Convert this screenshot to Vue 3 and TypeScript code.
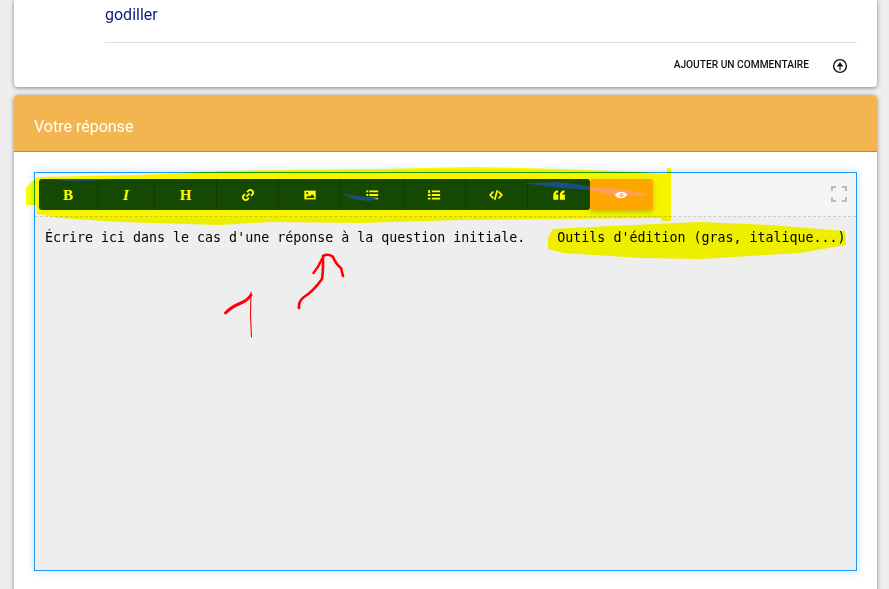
<script setup lang="ts">
interface ToolButton {
  name: string;
  label?: string;
  path?: string;
}

const tools: ToolButton[] = [
  { name: 'bold', label: 'B' },
  { name: 'italic', label: 'I' },
  { name: 'heading', label: 'H' },
  { name: 'link', path: 'M6.2 9.8 9.8 6.2M7 4.6l1.6-1.6a2.8 2.8 0 0 1 4 0l.4.4a2.8 2.8 0 0 1 0 4L11.4 9M9 11.4 7.4 13a2.8 2.8 0 0 1-4 0L3 12.6a2.8 2.8 0 0 1 0-4L4.6 7' },
  { name: 'image' },
  { name: 'list', path: 'M5 3.800H15M5 8H15M5 12.200H15M1.500 3.800h2.200M1.500 8h2.200M1.500 12.200h2.200' },
  { name: 'ordered', path: 'M5.500 3.800H15M5.500 8H15M5.500 12.200H15M2.500 2.200v3.400M1 8h3M1 12.200h3' },
  { name: 'code', path: 'M5 4 1.400 8 5 12M11 4 14.600 8 11 12M9.500 2.500 6.500 13.500' },
]

const sentence = "Écrire ici dans le cas d'une réponse à la question initiale.    Outils d'édition (gras, italique...)"
</script>

<template>
  <div class="page">
    <section class="card comment">
      <div class="comment-body">
        <p class="word">godiller</p>
        <div class="actions">
          <span class="add">AJOUTER UN COMMENTAIRE</span>
          <svg class="up" viewBox="0 0 16 16" aria-hidden="true">
            <circle cx="8" cy="8" r="6.4" fill="none" stroke="#111" stroke-width="1.4" />
            <path d="M8 12V7M5.800 8 8 5 10.200 8z" fill="#111" stroke="#111" stroke-width="1.1" />
          </svg>
        </div>
      </div>
    </section>

    <section class="card answer">
      <h2 class="answer-head">Votre réponse</h2>
      <div class="answer-body">
        <div class="editor">
          <div class="toolbar">
            <div class="tools">
              <button v-for="t in tools" :key="t.name" type="button" class="tool">
                <span v-if="t.label" class="glyph" :class="t.name">{{ t.label }}</span>
                <svg v-else-if="t.name === 'image'" class="icon" viewBox="0 0 16 16" aria-hidden="true">
                  <path d="M1.500 3h13v10h-13z" fill="#ffff00" />
                  <path d="M3.200 11.400l2.800-2.800 1.600 1.400 2.800-3 2.400 2.400v2z" fill="#154800" />
                  <circle cx="4.800" cy="5.800" r="1.200" fill="#154800" />
                </svg>
                <svg v-else class="icon" viewBox="0 0 16 16" aria-hidden="true">
                  <path :d="t.path" fill="none" stroke="#ffff00" :stroke-width="t.name === 'code' ? 2 : 2.100" />
                </svg>
              </button>
              <button type="button" class="tool">
                <svg class="icon" viewBox="0 0 16 16" aria-hidden="true">
                  <path d="M1.500 13.500V8.200C1.500 5 3.500 3 6.800 2.700v2.300C5 5.200 4.200 6 4.100 7.300h3.100v6.200zM9 13.500V8.200C9 5 11 3 14.300 2.700v2.300c-1.800.2-2.600 1-2.700 2.300h3.100v6.200z" fill="#ffff00" />
                </svg>
              </button>
              <button type="button" class="tool preview">
                <svg class="streak" viewBox="0 0 63 31" aria-hidden="true">
                  <path d="M0 8 30 10 58 15 50 17 20 16 0 11Z" fill="#ff9f5c" />
                </svg>
                <svg class="icon eye" viewBox="0 0 16 16" aria-hidden="true">
                  <path d="M1 8c1.800-2.600 4.200-3.800 7-3.800s5.200 1.200 7 3.800c-1.800 2.600-4.200 3.800-7 3.800S2.800 10.600 1 8z" fill="#fff" />
                  <circle cx="8.500" cy="8" r="2.300" fill="#ff9f5c" />
                  <circle cx="8" cy="7.500" r="1" fill="#fff" />
                </svg>
              </button>
            </div>
            <svg class="fullscreen" viewBox="0 0 16 16" aria-hidden="true">
              <path d="M1 5V1h4M11 1h4v4M15 11v4h-4M5 15H1v-4" fill="none" stroke="#bbb" stroke-width="2" />
            </svg>
          </div>
          <div class="content">
            <span class="line">{{ sentence }}</span>
          </div>
        </div>
      </div>
    </section>

    <!-- feutre jaune, passe sous les boutons et le texte -->
    <svg class="marks low" viewBox="0 0 889 589" aria-hidden="true">
      <path d="M26 187 38 177 137 175 220 171 290 170 380 169 473 167 560 169 640 172 667 174 667 168 671 168 671 221 662 221 661 218 560 219 460 220 360 223 270 222 220 225 120 222 60 218 37 214 36 205 26 205Z" fill="#ffff00" />
      <path d="M553 229 610 226 700 222 770 225 845 231 846 245 800 253 700 259 640 258 563 253 548 249 548 238Z" fill="#ffff00" />
    </svg>

    <!-- traits faits a la main par dessus la capture -->
    <svg class="marks high" viewBox="0 0 889 589" aria-hidden="true">
      <path d="M53 179 113 179 90 181 66 181Z" fill="#1b4f7a" />
      <path d="M342 193 352 195 380 199 368 201 352 199Z" fill="#1b4f7a" />
      <path d="M522 183 560 182 590 186 590 190 560 188Z" fill="#1b4f7a" />
      <g fill="none" stroke="#f00" stroke-linecap="round" stroke-linejoin="round">
        <path d="M225.500 313C231 307 236 305 241 303S249 298 251 295" stroke-width="3" />
        <path d="M251 292 250.500 315 251.500 337" stroke-width="1.100" />
        <path d="M299 308C298.500 303 300 300 304 297C312 292 317 286 322 279C323.500 270 323 264 323 256C327 254 331 255 333 257C335 262 337 265 341 268L343 276" stroke-width="2.600" />
        <path d="M313.500 273C316 270 319 266 322 259" stroke-width="2.400" />
      </g>
    </svg>
  </div>
</template>

<style>
html, body { margin: 0; height: 100%; overflow: hidden; background: #eee; }
</style>

<style scoped>
.page {
  position: relative;
  height: 589px;
  overflow: hidden;
  box-sizing: border-box;
  padding: 0 12px 0 14px;
  background: #eee;
  font-family: Roboto, "Liberation Sans", sans-serif;
}
.card {
  background: #fff;
  border-radius: 4px;
  box-shadow: 0 1px 4px rgba(0, 0, 0, 0.45);
}
.comment { height: 87px; border-radius: 0 0 4px 4px; }
.comment-body { margin: 0 20px 0 91px; }
.word {
  margin: 0;
  height: 43px;
  box-sizing: border-box;
  padding-top: 6px;
  border-bottom: 1px solid #ddd;
  font-size: 16px;
  line-height: 18px;
  color: #0b1a80;
}
.actions {
  display: flex;
  align-items: center;
  justify-content: flex-end;
  gap: 23px;
  padding: 12px 9px 0 0;
}
.add {
  font-size: 10.200px;
  font-weight: 500;
  line-height: 14px;
  color: #111;
}
.up { width: 16px; height: 16px; margin-top: 3px; }

.answer { margin-top: 8px; height: 520px; }
.answer-head {
  margin: 0;
  height: 57px;
  box-sizing: border-box;
  padding: 0 20px;
  background: #f2b550;
  border-bottom: 1px solid #c98a1c;
  border-radius: 4px 4px 0 0;
  font-size: 16px;
  font-weight: 400;
  line-height: 63px;
  color: #fff;
}
.answer-body { padding: 20px 20px 0; }
.editor {
  height: 399px;
  box-sizing: border-box;
  border: 1px solid #2196f3;
  background: #eee;
  box-shadow: 0 0 8px rgba(33, 150, 243, 0.3);
}
.toolbar {
  display: flex;
  justify-content: space-between;
  align-items: flex-start;
  height: 44px;
  box-sizing: border-box;
  padding: 6px 9px 0 4px;
  background: #f5f5f5;
  border-bottom: 1px dashed #ccc;
}
.tools { display: flex; position: relative; z-index: 2; }
.tool {
  position: relative;
  display: flex;
  align-items: center;
  justify-content: center;
  width: 62.140px;
  height: 31px;
  padding: 0;
  border: 0;
  border-right: 1px solid #103c00;
  background: #154800;
}
.tool:nth-child(1) { width: 59px; border-radius: 3px 0 0 3px; }
.tool:nth-child(2) { width: 57px; }
.tool:nth-child(9) { border-radius: 0 3px 3px 0; border-right: 0; }
.preview {
  width: 63px;
  background: #ffa500;
  border-right: 0;
  border-radius: 3px;
  box-shadow: 0 2px 5px rgba(90, 80, 0, 0.35);
}
.glyph {
  font-family: "Liberation Serif", serif;
  font-size: 15px;
  font-weight: 700;
  line-height: 16px;
  color: #ffff00;
}
.italic { font-style: italic; }
.icon { width: 14px; height: 14px; }
.streak { position: absolute; left: 0; top: 0; width: 63px; height: 31px; }
.eye { position: relative; }
.fullscreen { width: 16px; height: 16px; margin-top: 7px; }
.content { padding: 10px 10px 0; }
.line {
  position: relative;
  z-index: 2;
  font-family: "DejaVu Sans Mono", "Liberation Mono", monospace;
  font-size: 13.300px;
  line-height: 18px;
  color: #000;
  white-space: pre;
}
.marks {
  position: absolute;
  left: 0;
  top: 0;
  width: 889px;
  height: 589px;
  pointer-events: none;
}
.low { z-index: 1; mix-blend-mode: multiply; }
.high { z-index: 3; }
</style>
